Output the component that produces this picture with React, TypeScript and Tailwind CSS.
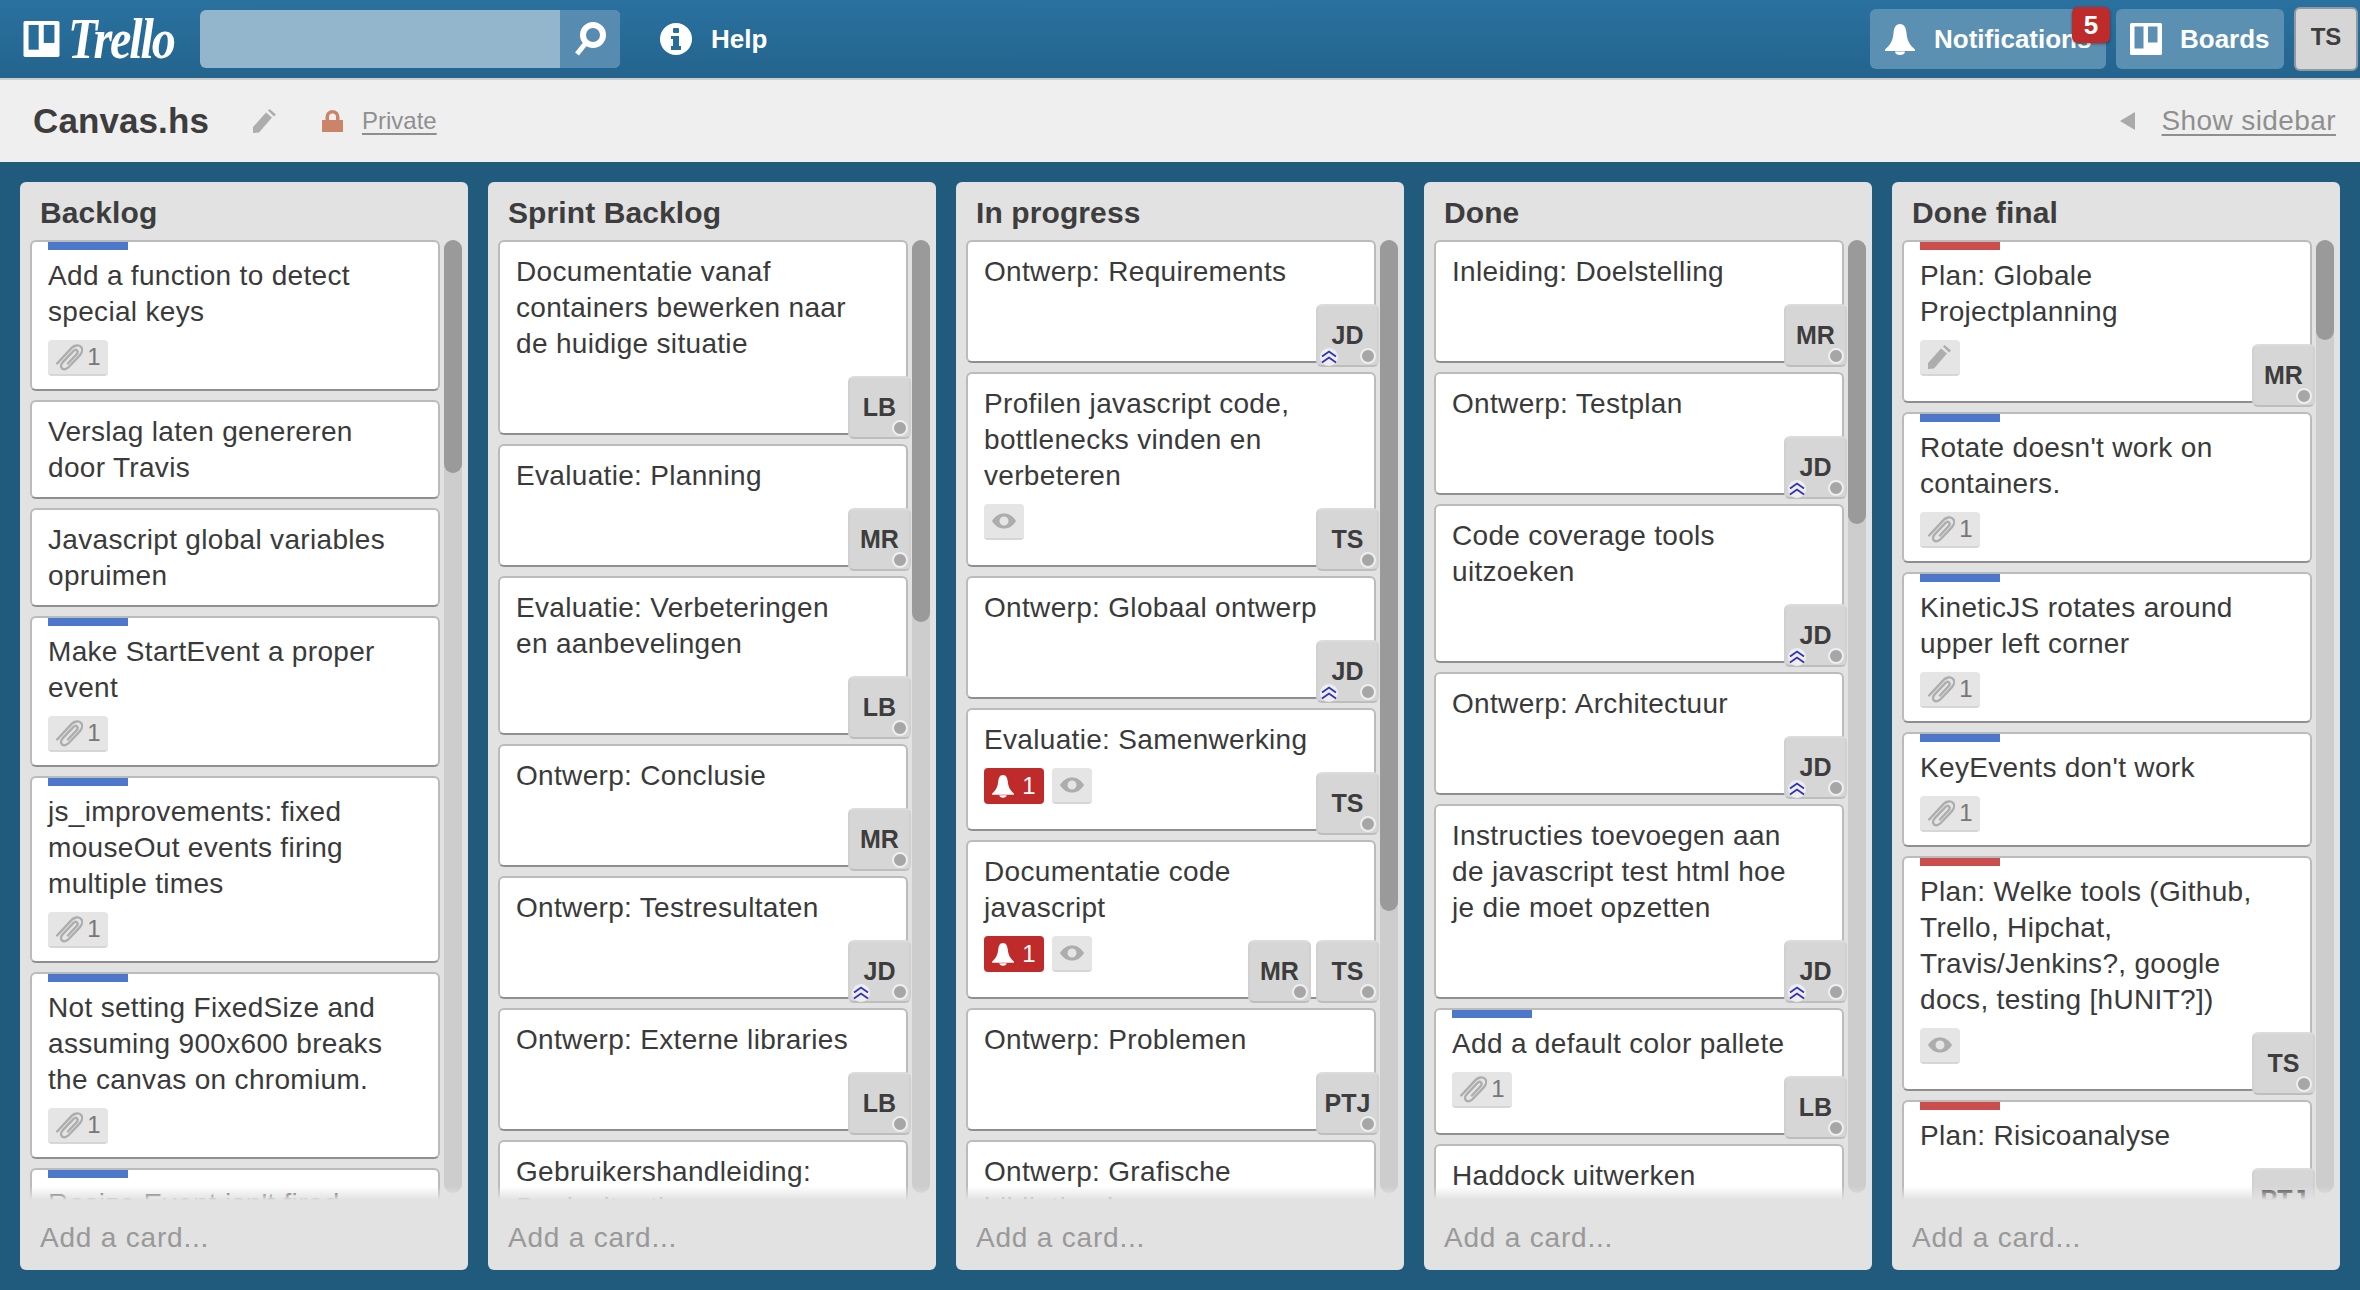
import React from "react";

type CardT = {
  lines: string[];
  label?: "blue" | "red";
  badges?: ("clip" | "eye" | "bell" | "pencil")[];
  members?: string[];
  vote?: boolean;
};
type ListT = { title: string; thumb: string; cards: CardT[] };

const lists: ListT[] = [
  {
    title: "Backlog",
    thumb: "h-[233px]",
    cards: [
      { lines: ["Add a function to detect", "special keys"], label: "blue", badges: ["clip"] },
      { lines: ["Verslag laten genereren", "door Travis"] },
      { lines: ["Javascript global variables", "opruimen"] },
      { lines: ["Make StartEvent a proper", "event"], label: "blue", badges: ["clip"] },
      { lines: ["js_improvements: fixed", "mouseOut events firing", "multiple times"], label: "blue", badges: ["clip"] },
      { lines: ["Not setting FixedSize and", "assuming 900x600 breaks", "the canvas on chromium."], label: "blue", badges: ["clip"] },
      { lines: ["Resize Event isn't fired"], label: "blue" },
    ],
  },
  {
    title: "Sprint Backlog",
    thumb: "h-[382px]",
    cards: [
      { lines: ["Documentatie vanaf", "containers bewerken naar", "de huidige situatie"], members: ["LB"] },
      { lines: ["Evaluatie: Planning"], members: ["MR"] },
      { lines: ["Evaluatie: Verbeteringen", "en aanbevelingen"], members: ["LB"] },
      { lines: ["Ontwerp: Conclusie"], members: ["MR"] },
      { lines: ["Ontwerp: Testresultaten"], members: ["JD"], vote: true },
      { lines: ["Ontwerp: Externe libraries"], members: ["LB"] },
      { lines: ["Gebruikershandleiding:", "Beginsituatie"] },
    ],
  },
  {
    title: "In progress",
    thumb: "h-[671px]",
    cards: [
      { lines: ["Ontwerp: Requirements"], members: ["JD"], vote: true },
      { lines: ["Profilen javascript code,", "bottlenecks vinden en", "verbeteren"], badges: ["eye"], members: ["TS"] },
      { lines: ["Ontwerp: Globaal ontwerp"], members: ["JD"], vote: true },
      { lines: ["Evaluatie: Samenwerking"], badges: ["bell", "eye"], members: ["TS"] },
      { lines: ["Documentatie code", "javascript"], badges: ["bell", "eye"], members: ["MR", "TS"] },
      { lines: ["Ontwerp: Problemen"], members: ["PTJ"] },
      { lines: ["Ontwerp: Grafische", "bibliotheek"] },
    ],
  },
  {
    title: "Done",
    thumb: "h-[284px]",
    cards: [
      { lines: ["Inleiding: Doelstelling"], members: ["MR"] },
      { lines: ["Ontwerp: Testplan"], members: ["JD"], vote: true },
      { lines: ["Code coverage tools", "uitzoeken"], members: ["JD"], vote: true },
      { lines: ["Ontwerp: Architectuur"], members: ["JD"], vote: true },
      { lines: ["Instructies toevoegen aan", "de javascript test html hoe", "je die moet opzetten"], members: ["JD"], vote: true },
      { lines: ["Add a default color pallete"], label: "blue", badges: ["clip"], members: ["LB"] },
      { lines: ["Haddock uitwerken"] },
    ],
  },
  {
    title: "Done final",
    thumb: "h-[100px]",
    cards: [
      { lines: ["Plan: Globale", "Projectplanning"], label: "red", badges: ["pencil"], members: ["MR"] },
      { lines: ["Rotate doesn't work on", "containers."], label: "blue", badges: ["clip"] },
      { lines: ["KineticJS rotates around", "upper left corner"], label: "blue", badges: ["clip"] },
      { lines: ["KeyEvents don't work"], label: "blue", badges: ["clip"] },
      { lines: ["Plan: Welke tools (Github,", "Trello, Hipchat,", "Travis/Jenkins?, google", "docs, testing [hUNIT?])"], label: "red", badges: ["eye"], members: ["TS"] },
      { lines: ["Plan: Risicoanalyse"], label: "red", members: ["PTJ"] },
    ],
  },
];

function BellIcon({ className, fill }: { className: string; fill: string }) {
  return (
    <svg viewBox="0 0 30 32" className={className} fill={fill}>
      <path d="M15 1C19.500 1 21 5 21.500 10C22 17 24.500 22 30 26.500L30 28L0 28L0 26.500C5.500 22 8 17 8.500 10C9 5 10.500 1 15 1Z" />
      <path d="M10 28.500H20C20 30.500 18 32 15 32C12 32 10 30.500 10 28.500Z" />
    </svg>
  );
}

function BoardIcon({ className, cut }: { className: string; cut: string }) {
  return (
    <svg viewBox="0 0 32 32" className={className}>
      <rect width="32" height="32" rx="1.500" fill="#fff" />
      <rect x="4.500" y="3.500" width="9" height="22" fill={cut} />
      <rect x="18" y="3.500" width="9.500" height="16" fill={cut} />
    </svg>
  );
}

function ClipIcon() {
  return (
    <svg viewBox="0 0 26 26" className="h-[28px] w-[28px]" fill="none" stroke="#adadad" strokeWidth="2.200" strokeLinecap="round">
      <path d="M2 19L15.500 4.500C18 2 22 1.500 24 3.500C26 5.500 25.300 9 23 11.500L12.500 22.500C10.500 24.500 8 25 6.500 23.500C5 22 5.500 19.500 7.500 17.500L17 7.500C18.200 6.300 19.500 6 20.500 7C21.500 8 21 9.300 20 10.500L12 19" />
    </svg>
  );
}

function EyeIcon() {
  return (
    <svg viewBox="0 0 24 16" className="h-[16px] w-[24px]">
      <path fillRule="evenodd" fill="#adadad" d="M0 8C3 3 7 .5 12 .5S21 3 24 8C21 13 17 15.500 12 15.500S3 13 0 8ZM12 3.500A4.500 4.500 0 1 0 12 12.500A4.500 4.500 0 1 0 12 3.500Z" />
    </svg>
  );
}

function PencilIcon({ className, fill }: { className: string; fill: string }) {
  return (
    <svg viewBox="0 0 24 24" className={className} fill={fill}>
      <path d="M0 24V18L13 3.500L19 8.500L6 23.500Z" />
      <path d="M15 1.500L16.500 0L23 5.500L21 7.500Z" />
    </svg>
  );
}

function Badge({ kind }: { kind: "clip" | "eye" | "bell" | "pencil" }) {
  if (kind === "bell") {
    return (
      <div className="flex h-[36px] w-[60px] items-center justify-center gap-[8px] rounded-[4px] bg-[#bf2a2a] text-[24px] tracking-normal text-white">
        <BellIcon className="h-[24px] w-[22px]" fill="#ffffff" />
        <span>1</span>
      </div>
    );
  }
  const base = "flex h-[36px] items-center justify-center rounded-[4px] border-b-2 border-[#d6d6d6] bg-[#e5e5e5] ";
  if (kind === "clip") {
    return (
      <div className={base + "w-[60px] gap-[4px] text-[24px] tracking-normal text-[#777777]"}>
        <ClipIcon />
        <span>1</span>
      </div>
    );
  }
  return (
    <div className={base + "w-[40px]"}>
      {kind === "eye" ? <EyeIcon /> : <PencilIcon className="h-[24px] w-[24px]" fill="#adadad" />}
    </div>
  );
}

function Member({ initials, vote }: { initials: string; vote?: boolean }) {
  return (
    <div className="relative flex h-[63px] w-[63px] items-center justify-center rounded-[6px] border-2 border-t-[#dcdcdc] border-r-[#d0d0d0] border-b-[#bdbdbd] border-l-[#d0d0d0] bg-[#d6d6d6] text-[25px] font-bold tracking-normal text-[#3d3d3d]">
      <span className="-mt-[2px]">{initials}</span>
      <span className="absolute right-[1px] bottom-[1px] h-[16px] w-[16px] rounded-full border-2 border-[#eeeeee] bg-[#a6a6a6]" />
      {vote && (
        <span className="absolute bottom-[-1px] left-[2px] flex h-[18px] w-[18px] items-center justify-center rounded-full bg-[#eeeeee]">
          <svg viewBox="0 0 16 14" className="h-[14px] w-[16px]" fill="none" stroke="#3030c0" strokeWidth="1.800">
            <path d="M1 6.500L8 1.500L15 6.500" />
            <path d="M1 12.500L8 7.500L15 12.500" />
          </svg>
        </span>
      )}
    </div>
  );
}

function Card({ card }: { card: CardT }) {
  const hasBadges = !!card.badges;
  const hasMembers = !!card.members;
  return (
    <div className="shrink-0 rounded-[6px] border-2 border-t-[#bbbbbb] border-r-[#bbbbbb] border-b-[#8f8f8f] border-l-[#bbbbbb] bg-white pt-[12px] pr-[15px] pb-[11px] pl-[16px]">
      {card.label && (
        <div className={"-mt-[12px] mb-[8px] h-[8px] w-[80px] " + (card.label === "blue" ? "bg-[#4d77cb]" : "bg-[#cb4d4d]")} />
      )}
      {card.lines.map((l) => (
        <div key={l} className="whitespace-nowrap">
          {l}
        </div>
      ))}
      {hasMembers ? (
        <div className="mt-[14px] -mr-[20px] -mb-[17px] flex h-[63px] items-start justify-between">
          <div className="-mt-[4px] flex gap-[8px]">
            {card.badges?.map((b, i) => <Badge key={i} kind={b} />)}
          </div>
          <div className="flex gap-[5px]">
            {card.members!.map((m) => (
              <Member key={m} initials={m} vote={card.vote} />
            ))}
          </div>
        </div>
      ) : (
        hasBadges && (
          <div className="mt-[10px] mb-[2px] flex gap-[8px]">
            {card.badges!.map((b, i) => (
              <Badge key={i} kind={b} />
            ))}
          </div>
        )
      )}
    </div>
  );
}

function List({ list }: { list: ListT }) {
  return (
    <div className="flex h-[1088px] w-[448px] shrink-0 flex-col rounded-[6px] bg-[#e2e2e2]">
      <div className="flex h-[58px] items-center pt-[4px] pl-[20px] text-[30px] font-bold tracking-[0.1px] text-[#3d3d3d]">
        {list.title}
      </div>
      <div className="relative flex h-[960px] overflow-hidden pl-[10px]">
        <div className="flex w-[410px] shrink-0 flex-col gap-[9px]">
          {list.cards.map((c) => (
            <Card key={c.lines[0]} card={c} />
          ))}
        </div>
        <div className="ml-[4px] h-[953px] w-[18px] rounded-[9px] bg-[#cdcdcd]">
          <div className={"w-[18px] rounded-[9px] bg-[#9a9a9a] " + list.thumb} />
        </div>
        <div className="absolute right-0 bottom-0 left-0 h-[14px] bg-linear-to-b from-[#e2e2e200] to-[#e2e2e2]" />
      </div>
      <div className="flex flex-1 items-center pt-[6px] pl-[20px] tracking-[0.8px] text-[#999999]">Add a card...</div>
    </div>
  );
}

export default function App() {
  return (
    <div className="flex h-[1290px] w-[2360px] flex-col overflow-hidden bg-[#205a7c] font-['Liberation_Sans',Arial,sans-serif] text-[28px] leading-[36px] tracking-[0.32px] text-[#3a3a3a]">
      <header className="flex h-[78px] shrink-0 items-center bg-linear-to-b from-[#2a71a0] to-[#24648e] pr-[2px] pl-[23px] text-[26px] font-bold tracking-normal text-white">
        <BoardIcon className="h-[36px] w-[37px]" cut="#286c9a" />
        <span className="ml-[8px] w-[132px] origin-left scale-x-[0.86] font-['Liberation_Serif',serif] text-[56px] font-bold tracking-[-2.500px] italic">Trello</span>
        <div className="flex h-[58px] w-[420px] overflow-hidden rounded-[6px] bg-[#94b6cc]">
          <div className="flex-1" />
          <div className="flex h-full w-[60px] items-center justify-center bg-[#578bb0]">
            <svg viewBox="0 0 32 34" className="h-[34px] w-[32px]" fill="none" stroke="#ffffff">
              <circle cx="19" cy="13" r="10" strokeWidth="6" />
              <path d="M11 22L3 32" strokeWidth="5" />
            </svg>
          </div>
        </div>
        <svg viewBox="0 0 32 32" className="ml-[40px] h-[32px] w-[32px]">
          <circle cx="16" cy="16" r="16" fill="#ffffff" />
          <rect x="13" y="5" width="6" height="5" rx="1" fill="#286c9a" />
          <path d="M11 13H19V23H21V27H11V23H13V16H11Z" fill="#286c9a" />
        </svg>
        <span className="ml-[19px]">Help</span>
        <div className="flex-1" />
        <div className="relative flex h-[60px] w-[236px] items-center rounded-[6px] bg-[#5b90b2] pl-[15px]">
          <BellIcon className="h-[32px] w-[30px]" fill="#ffffff" />
          <span className="ml-[19px]">Notifications</span>
          <span className="absolute top-[-2px] right-[-4px] flex h-[36px] w-[38px] items-center justify-center rounded-[6px] bg-[#bf2a2a] shadow-[0_1px_3px_rgba(0,0,0,0.4)]">5</span>
        </div>
        <div className="ml-[10px] flex h-[60px] w-[168px] items-center rounded-[6px] bg-[#5b90b2] pl-[14px]">
          <BoardIcon className="h-[32px] w-[32px]" cut="#5b90b2" />
          <span className="ml-[18px]">Boards</span>
        </div>
        <div className="ml-[10px] flex h-[64px] w-[64px] items-center justify-center rounded-[6px] border-2 border-[#8f9aa3] bg-[#d6d6d6] pb-[4px] text-[24px] text-[#3d3d3d]">
          TS
        </div>
      </header>

      <div className="flex h-[84px] shrink-0 items-center border-t-2 border-[#cdcdcd] bg-[#efefef] pr-[24px] pl-[33px]">
        <span className="text-[35px] font-bold tracking-[0.1px] text-[#3d3d3d]">Canvas.hs</span>
        <PencilIcon className="ml-[44px] h-[24px] w-[24px]" fill="#adadad" />
        <svg viewBox="0 0 21 22" className="ml-[45px] h-[22px] w-[21px]" fill="#cc8468">
          <path d="M0 10H21V22H0Z" />
          <path fillRule="evenodd" d="M3.500 11V7A7 7 0 0 1 17.500 7V11H14V7A3.500 3.500 0 0 0 7 7V11Z" />
        </svg>
        <span className="ml-[19px] text-[24px] tracking-normal text-[#8f8f8f] underline decoration-2 underline-offset-[4px]">Private</span>
        <div className="flex-1" />
        <svg viewBox="0 0 15 18" className="h-[18px] w-[15px]" fill="#aaaaaa">
          <path d="M15 0V18L0 9Z" />
        </svg>
        <span className="ml-[27px] tracking-[0.4px] text-[#8f8f8f] underline decoration-2 underline-offset-[4px]">Show sidebar</span>
      </div>

      <main className="flex gap-[20px] pt-[20px] pl-[20px]">
        {lists.map((l) => (
          <List key={l.title} list={l} />
        ))}
      </main>
    </div>
  );
}
